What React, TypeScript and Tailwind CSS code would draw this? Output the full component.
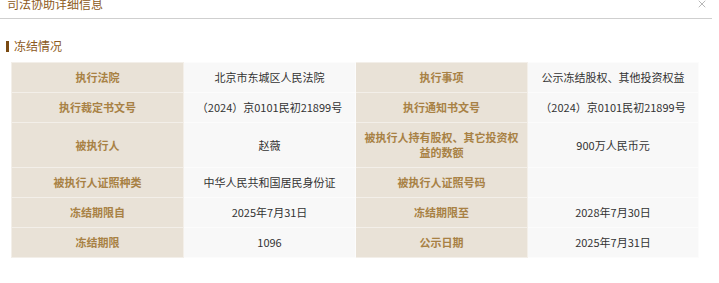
import { X } from 'lucide-react';

const rows: [string, string, string, string][] = [
  ['执行法院', '北京市东城区人民法院', '执行事项', '公示冻结股权、其他投资权益'],
  ['执行裁定书文号', '（2024）京0101民初21899号', '执行通知书文号', '（2024）京0101民初21899号'],
  ['被执行人', '赵薇', '被执行人持有股权、其它投资权益的数额', '900万人民币元'],
  ['被执行人证照种类', '中华人民共和国居民身份证', '被执行人证照号码', ''],
  ['冻结期限自', '2025年7月31日', '冻结期限至', '2028年7月30日'],
  ['冻结期限', '1096', '公示日期', '2025年7月31日'],
];

const font = { fontFamily: '"Noto Sans CJK SC", "Noto Sans", sans-serif' };

export default function App() {
  return (
    <div className="w-[719px] h-[283px] bg-white overflow-hidden" style={font}>
      <div className="relative w-[712px] h-[22px] border-b border-[#cfcfcf]">
        <div className="pl-[7px] -mt-[3px] text-[12px] leading-[14px] text-[#8c5a22]">司法协助详细信息</div>
        <X className="absolute right-[4px] top-[1px] w-[12px] h-[12px] text-[#a0a0a0]" strokeWidth={1.5} />
      </div>

      <div className="flex items-center mt-[21px] pl-[6px] h-[12px]">
        <span className="w-[3px] h-[11px] bg-[#7a4a12] mr-[5px]" />
        <span className="text-[12px] leading-[12px] text-[#8c5a22]">冻结情况</span>
      </div>

      <table className="ml-[11px] mt-[10px] w-[687px] table-fixed border-collapse text-[11px] leading-[15px]">
        <tbody>
          {rows.map((r, i) => (
            <tr key={i} className={i === 2 ? 'h-[45px]' : 'h-[30px]'}>
              <td className="w-[172px] bg-[#e9e2d7] border border-[#f3efe9] text-center text-[#a88144] font-semibold px-[8px]">{r[0]}</td>
              <td className="w-[172px] bg-[#f8f8f8] border border-[#fcfcfc] text-center text-[#333] px-[6px]">{r[1]}</td>
              <td className="w-[172px] bg-[#e9e2d7] border border-[#f3efe9] text-center text-[#a88144] font-semibold px-[8px]">{r[2]}</td>
              <td className="w-[171px] bg-[#f8f8f8] border border-[#fcfcfc] text-center text-[#333] px-[6px]">{r[3]}</td>
            </tr>
          ))}
        </tbody>
      </table>
    </div>
  );
}
